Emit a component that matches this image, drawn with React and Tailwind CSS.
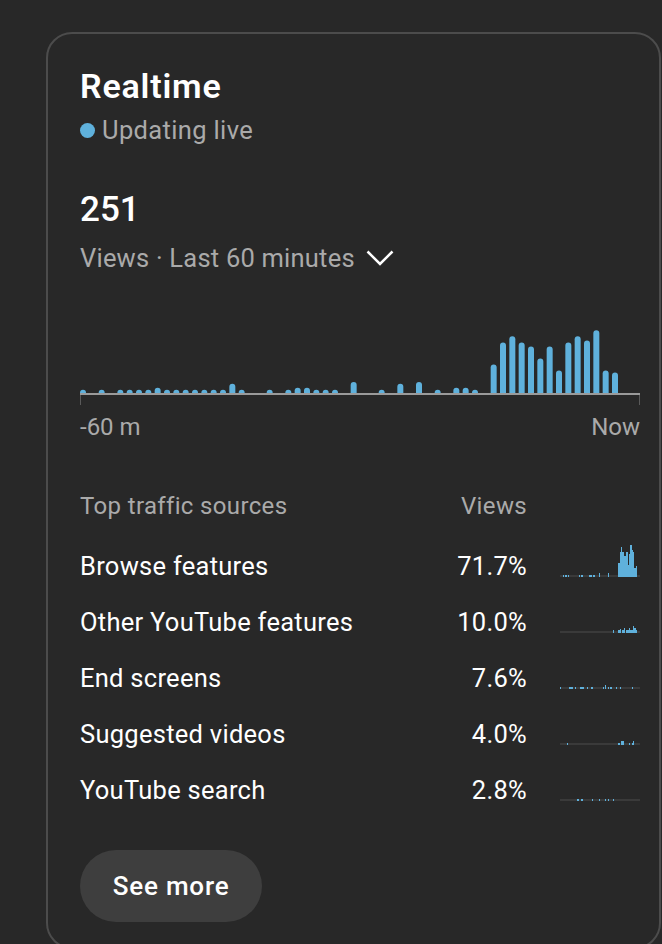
import React from "react";

const BLUE = "#5fb1dc";

// heights of the 60 one-minute bars, index -> px
const MINUTES = {
  0: 3.3, 2: 3.3, 4: 3.3, 5: 3.3, 6: 3.3, 7: 3.3, 8: 5.3, 9: 3.3, 10: 3.3,
  11: 3.3, 12: 3.3, 13: 3.3, 14: 3.3, 15: 3.3, 16: 9.3, 17: 3.3, 20: 3.3,
  22: 3.3, 23: 5.3, 24: 5.3, 25: 3.3, 26: 3.3, 27: 3.3, 29: 11, 32: 3.3,
  34: 9.3, 36: 11, 38: 3.3, 40: 5.3, 41: 5.3, 42: 3.3, 44: 28.4, 45: 50.4,
  46: 56.7, 47: 50.4, 48: 46.4, 49: 34.4, 50: 46.4, 51: 22.4, 52: 50.4,
  53: 56.7, 54: 52.4, 55: 62.7, 56: 22.4, 57: 20.4,
};

// sparklines: [x, width, height]
const sources = [
  {
    name: "Browse features",
    pct: "71.7%",
    bars: [
      [3, 1, 2], [5, 2, 2], [8, 1, 2], [19, 1, 2], [21, 2, 2], [29, 3, 2],
      [33, 2, 2], [39, 1, 4], [48, 1, 4], [58, 2, 14], [60, 1, 25], [61, 1, 30],
      [62, 2, 25], [64, 2, 21], [66, 2, 25], [68, 1, 12], [69, 1, 23],
      [70, 2, 32], [72, 1, 27], [73, 1, 25], [74, 2, 9], [76, 1, 11],
    ],
  },
  {
    name: "Other YouTube features",
    pct: "10.0%",
    bars: [
      [53, 1, 3], [58, 2, 3], [60, 1, 4], [62, 2, 3], [64, 1, 5], [66, 3, 3],
      [69, 1, 5], [70, 3, 3], [73, 1, 7], [74, 2, 5], [76, 1, 3],
    ],
  },
  {
    name: "End screens",
    pct: "7.6%",
    bars: [
      [0, 1, 2], [9, 4, 2], [15, 1, 2], [20, 4, 2], [27, 1, 2], [31, 2, 2],
      [43, 1, 2], [45, 1, 4], [48, 1, 2], [50, 2, 2], [56, 1, 2], [60, 1, 2],
      [72, 1, 2],
    ],
  },
  {
    name: "Suggested videos",
    pct: "4.0%",
    bars: [[7, 1, 2], [58, 2, 2], [61, 3, 4], [69, 1, 2], [72, 1, 2], [73, 1, 4]],
  },
  {
    name: "YouTube search",
    pct: "2.8%",
    bars: [[17, 2, 2], [21, 2, 2], [32, 1, 2], [39, 1, 2], [45, 1, 2], [48, 1, 2], [53, 1, 2]],
  },
];

function barPath(i, h) {
  const x = i * (560 / 60);
  const base = 93;
  const top = base - h;
  return `M${x} ${base} V${top + 3} A3 3 0 0 1 ${x + 6} ${top + 3} V${base} Z`;
}

function Chart() {
  return (
    <svg width="560" height="106" className="block mt-[27px]">
      {Object.entries(MINUTES).map(([i, h]) => (
        <path key={i} d={barPath(Number(i), h)} fill={BLUE} />
      ))}
      <rect x="0" y="93" width="560" height="2" fill="#9a9a9a" />
      <rect x="0" y="95" width="1" height="10" fill="#5a5a5a" />
      <rect x="559" y="95" width="1" height="10" fill="#5a5a5a" />
    </svg>
  );
}

function Spark({ bars }) {
  return (
    <svg width="80" height="34" className="block self-start mt-[5px] ml-[33px] shrink-0">
      <rect x="0" y="32" width="80" height="2" fill="#3a3a3a" />
      {bars.map(([x, w, h], k) => (
        <rect key={k} x={x} y={34 - h} width={w} height={h} fill={BLUE} />
      ))}
    </svg>
  );
}

export default function App() {
  return (
    <div className="h-[944px] overflow-hidden bg-[#282828] pt-[32px] pl-[46px] font-['Roboto',sans-serif]">
      <div className="w-[615px] h-[917px] rounded-[26px] border-2 border-[#4c4c4c] pl-[32px] pt-[32px]">
        <div className="w-[560px]">
          <h1 className="text-[34px] leading-[40px] font-semibold tracking-[0.8px] text-white">Realtime</h1>
          <div className="mt-[9px] flex items-center gap-[7px]">
            <span className="w-[15px] h-[15px] rounded-full bg-[#5fb1dc]" />
            <span className="text-[25.5px] leading-[30px] tracking-[0.35px] text-[#aaaaaa]">Updating live</span>
          </div>

          <div className="mt-[45px] text-[35px] leading-[40px] font-medium text-white">251</div>
          <div className="mt-[13px] flex items-center">
            <span className="text-[25.5px] leading-[30px] tracking-[0.22px] text-[#aaaaaa]">Views · Last 60 minutes</span>
            <svg width="28" height="16" className="ml-[11px]" fill="none">
              <path d="M1.5 1.5 L14 14 L26.5 1.5" stroke="#ffffff" strokeWidth="2.5" />
            </svg>
          </div>

          <Chart />
          <div className="mt-[7px] flex justify-between text-[24px] leading-[28px] text-[#aaaaaa]">
            <span>-60 m</span>
            <span>Now</span>
          </div>

          <div className="mt-[51px] flex text-[24px] leading-[28px] tracking-[0.35px] text-[#aaaaaa]">
            <span className="flex-1">Top traffic sources</span>
            <span className="mr-[113px]">Views</span>
          </div>

          <ul className="mt-[18px]">
            {sources.map((s) => (
              <li key={s.name} className="h-[56px] flex items-center text-[25.5px] leading-[30px] tracking-[0.27px] text-white">
                <span className="flex-1">{s.name}</span>
                <span className="text-right">{s.pct}</span>
                <Spark bars={s.bars} />
              </li>
            ))}
          </ul>

          <button className="mt-[32px] w-[182px] h-[72px] rounded-full bg-[#3e3e3e] text-white text-[26px] tracking-[0.8px] font-medium flex items-center justify-center">
            See more
          </button>
        </div>
      </div>
    </div>
  );
}
